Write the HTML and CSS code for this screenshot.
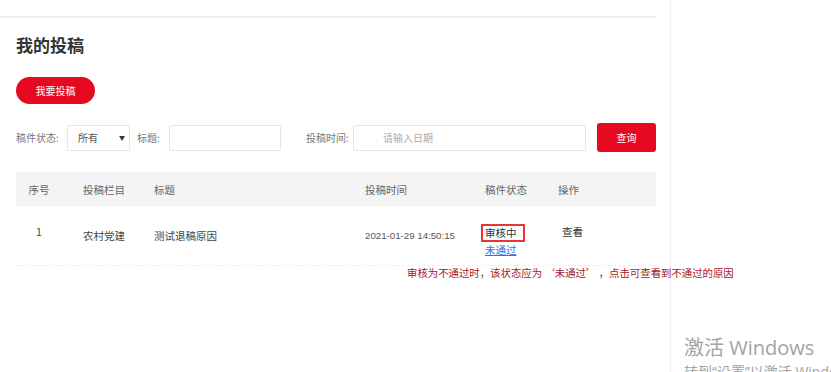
FILE: index.html
```html
<!DOCTYPE html>
<html lang="zh-CN">
<head>
    <meta charset="UTF-8">
    <meta name="viewport" content="width=device-width, initial-scale=1.0">
    <title>我的投稿</title>
    <link rel="stylesheet" href="styles.css">
</head>
<body>
    <div class="page">
        <div class="top-bar"></div>
        <div class="content">
            <h2 class="title">我的投稿</h2>
            <button class="btn-submit" type="button">我要投稿</button>
            <div class="filter">
                <label class="lbl lbl-status">稿件状态:</label>
                <div class="select"><span>所有</span><span class="arrow">▼</span></div>
                <label class="lbl lbl-title">标题:</label>
                <input class="input input-title" type="text">
                <label class="lbl lbl-time">投稿时间:</label>
                <input class="input input-date" type="text" placeholder="请输入日期">
                <button class="btn-query" type="button">查询</button>
            </div>
            <div class="table">
                <div class="row head">
                    <div class="cell c1">序号</div>
                    <div class="cell c2">投稿栏目</div>
                    <div class="cell c3">标题</div>
                    <div class="cell c4">投稿时间</div>
                    <div class="cell c5">稿件状态</div>
                    <div class="cell c6">操作</div>
                </div>
                <div class="row body">
                    <div class="cell c1 up">1</div>
                    <div class="cell c2">农村党建</div>
                    <div class="cell c3">测试退稿原因</div>
                    <div class="cell c4 date">2021-01-29 14:50:15</div>
                    <div class="cell c5 status">
                        <span class="state">审核中</span>
                        <a class="fail" href="#">未通过</a>
                    </div>
                    <div class="cell c6 up"><a class="view" href="#">查看</a></div>
                </div>
            </div>
            <p class="note">审核为不通过时，该状态应为 ‘未通过’ ，点击可查看到不通过的原因</p>
        </div>
    </div>
    <div class="watermark">
        <div class="wm-big">激活 Windows</div>
        <div class="wm-small">转到“设置”以激活 Windows。</div>
    </div>
</body>
</html>
```

FILE: styles.css
```css
body {
    margin: 0;
    padding: 0;
    background: #fff;
    font-family: "Liberation Sans", "Noto Sans CJK SC", sans-serif;
    color: #333;
    overflow: hidden;
}
.page {
    position: relative;
    width: 670px;
    min-height: 100vh;
    border-right: 1px solid #eeeeee;
}
.top-bar {
    width: 656px;
    height: 16px;
    border-bottom: 2px solid #eeeeee;
}
.content {
    width: 640px;
    padding-left: 16px;
}
.title {
    margin: 17px 0 0;
    font-size: 17px;
    line-height: 24px;
    font-weight: bold;
    color: #333;
}
.btn-submit {
    display: block;
    margin-top: 18px;
    width: 79px;
    height: 27px;
    border: none;
    border-radius: 14px;
    background: #e60a21;
    color: #fff;
    font-family: "Noto Sans CJK SC", sans-serif;
    font-size: 10px;
    padding: 0;
}
.filter {
    display: flex;
    align-items: center;
    margin-top: 19px;
    height: 29px;
}
.lbl {
    font-family: "Noto Sans CJK SC", sans-serif;
    font-size: 10px;
    color: #777;
}
.lbl-status {
    width: 51px;
}
.lbl-title {
    width: 32px;
    margin-left: 7px;
}
.lbl-time {
    width: 47px;
    margin-left: 25px;
}
.select {
    box-sizing: border-box;
    width: 63px;
    height: 26px;
    border: 1px solid #e6e6e6;
    border-radius: 2px;
    display: flex;
    align-items: center;
    justify-content: space-between;
    padding: 0 4px 0 10px;
    font-family: "Noto Sans CJK SC", sans-serif;
    font-size: 10px;
    color: #555;
}
.arrow {
    font-size: 6px;
    color: #333;
}
.input {
    box-sizing: border-box;
    height: 26px;
    border: 1px solid #e6e6e6;
    border-radius: 2px;
    padding: 0 0 0 29px;
    font-family: "Noto Sans CJK SC", sans-serif;
    font-size: 10px;
    outline: none;
}
.input::placeholder {
    color: #aaa;
}
.input-title {
    width: 112px;
}
.input-date {
    width: 233px;
}
.btn-query {
    margin-left: 11px;
    width: 59px;
    height: 29px;
    border: none;
    border-radius: 3px;
    background: #e60a21;
    color: #fff;
    font-family: "Noto Sans CJK SC", sans-serif;
    font-size: 10px;
    padding: 0;
}
.table {
    margin-top: 20px;
    font-family: "Noto Sans CJK SC", sans-serif;
    font-size: 10.5px;
}
.row {
    display: grid;
    grid-template-columns: 67px 71px 211px 120px 73px 1fr;
    align-items: center;
}
.head {
    height: 34px;
    background: #f4f4f4;
    color: #666;
}
.body {
    height: 59px;
    border-bottom: 1px dashed #eeeeee;
    color: #444;
}
.c1 {
    box-sizing: border-box;
    padding-right: 21px;
    text-align: center;
}
.up {
    padding-bottom: 8px;
}
.date {
    font-family: "Liberation Sans", sans-serif;
    font-size: 9.7px;
    color: #555;
}
.status {
    display: flex;
    flex-direction: column;
    align-items: flex-start;
    padding-top: 8px;
}
.state {
    margin-left: -4px;
    padding: 1px 6px 1px 2px;
    border: 2px solid #e8353a;
    line-height: 12px;
    color: #333;
}
.fail {
    color: #3a6ee8;
    text-decoration: underline;
    line-height: 13px;
    margin-top: 1px;
}
.view {
    margin-left: 4px;
    color: #333;
    text-decoration: none;
}
.note {
    position: absolute;
    left: 407px;
    top: 265px;
    margin: 0;
    font-family: "Noto Sans CJK SC", sans-serif;
    font-size: 10.4px;
    line-height: 15px;
    color: #a8171c;
    white-space: nowrap;
}
.watermark {
    position: absolute;
    left: 684px;
    top: 334px;
    color: #a3a3a3;
    font-family: "Open Sans", "Noto Sans CJK SC", sans-serif;
    white-space: nowrap;
}
.wm-big {
    font-size: 20px;
    line-height: 28px;
}
.wm-small {
    font-size: 14px;
    line-height: 20px;
}
```
